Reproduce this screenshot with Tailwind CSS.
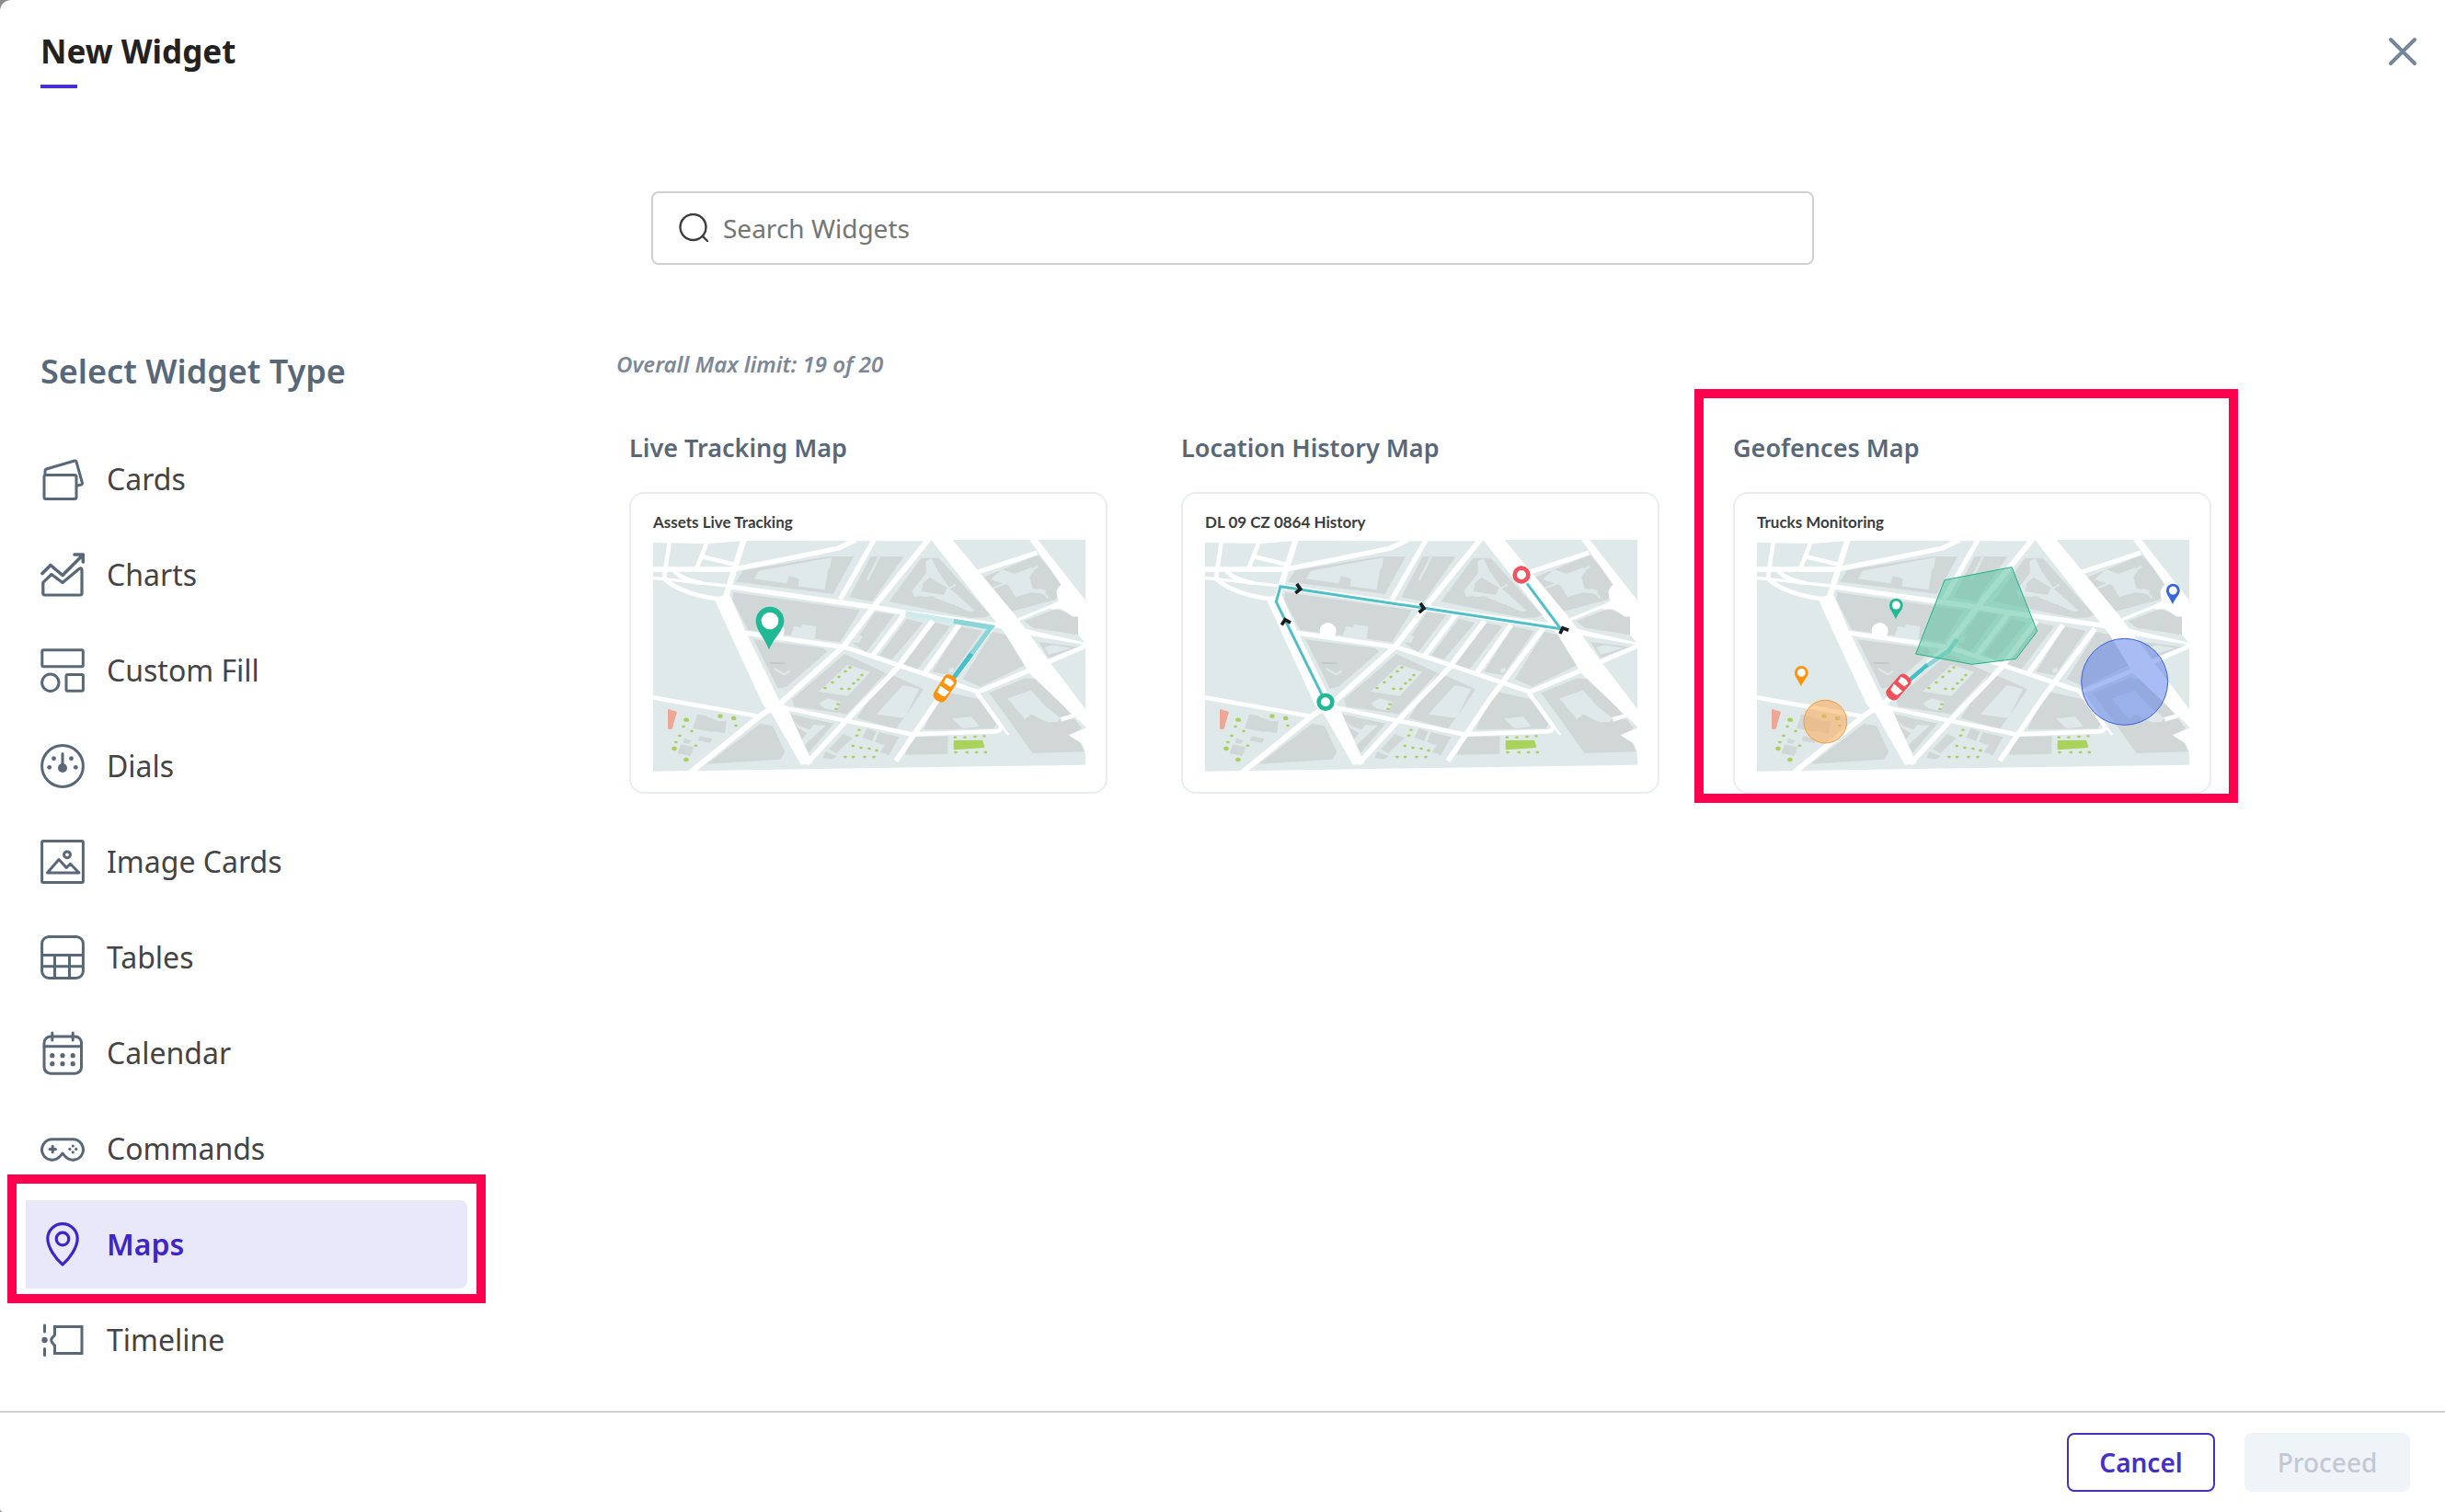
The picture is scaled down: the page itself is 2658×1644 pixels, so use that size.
<!DOCTYPE html>
<html lang="en">
  <head>
    <meta charset="UTF-8" />
    <meta name="viewport" content="width=device-width, initial-scale=1.0" />
    <title>New Widget</title>
    <script src="https://cdn.jsdelivr.net/npm/@tailwindcss/browser@4"></script>
  </head>
  <body class="bg-[#8c8c8c] font-['Noto_Sans',sans-serif]">
    <!-- Shared map artwork -->
    <svg class="hidden" aria-hidden="true">
      <symbol id="city" viewBox="30 21 1410 756">
        <path fill="#dfe9ea" d="M30 30 215 33 325 24 920 25 960 21H1440V755L30 776z" />
        <!-- blocks -->
        <g fill="#d1d7d7">
          <path d="M300 158 325 120 600 75H685L617 197z" />
          <path d="M292 192 705 250 640 355 340 315 288 215z" />
          <path d="M358 346 585 374 597 386 465 500 437 506z" />
          <path d="M655 393 788 455 662 590 490 564 484 540z" />
          <path d="M470 588 618 620 538 716z" />
          <path d="M380 620 420 628 460 712 445 737 205 752z" />
          <path d="M740 75H848L744 222 670 208z" />
          <path d="M905 80H962L1130 266 1110 274 1068 276 800 222z" />
          <path d="M1090 150 1285 70 1332 122 1360 165 1344 216 1195 256z" />
          <path d="M1240 286 1345 246 1416 271V331L1270 308z" />
          <path d="M1288 354 1418 370 1320 406z" />
          <path d="M1137 321 1205 335 1252 425 1098 500 1040 475z" />
          <path d="M755 256 817 265 725 388 683 360z" />
          <path d="M858 278 910 292 808 412 768 397z" />
          <path d="M943 290 1000 302 890 446 845 425z" />
          <path d="M1032 303 1104 318 1002 462 940 452z" />
          <path d="M790 455 868 487 912 508 878 560 822 637 695 602z" />
          <path d="M970 514 1092 540 1150 622 1140 637 912 640z" />
          <path d="M1126 520 1245 472 1300 478 1428 635 1398 655 1425 680 1435 712 1268 717z" />
          <path d="M650 653 680 668 628 716 604 704z" />
          <path d="M592 711 630 727 612 737 583 732z" />
          <path d="M727 636 757 645 745 678 713 665z" />
          <path d="M767 648 832 664 800 724 770 712 787 692 754 680z" />
          <path d="M872 664 992 661 990 719 852 722z" />
          <path d="M174 590 205 595 208 600 232 606 240 612 270 612 264 652 225 645 222 648 160 635z" />
          <path d="M182 660 222 670 218 684 176 676z" />
          <path d="M132 668 155 675 148 686 128 683z" />
          <path d="M120 688 162 697 152 726 110 717z" />
        </g>
        <!-- courtyards -->
        <g fill="#dfe9ea">
          <path d="M374 122 612 78 608 108 600 122 590 184 503 172 506 147 474 138 466 163 360 148z" />
          <path d="M482 323 490 303 513 306 516 297 562 303 557 346 478 337z" />
          <path d="M642 450 662 428 678 432 738 452 665 530 570 515z" />
          <path d="M570 555 600 538 640 550 630 578 592 572z" />
          <path d="M492 612 506 628 540 640 554 624 594 626 524 690 512 678 532 652 500 632z" />
          <path d="M920 90 938 82 958 122 1000 182 1080 252 1062 255 940 205 884 210 874 188 920 130z" />
          <path d="M1130 150 1170 118 1208 132 1262 112 1275 118 1258 142 1268 180 1312 185 1308 198 1262 192 1212 208 1188 168z" />
          <path d="M1305 372 1335 364 1395 374 1320 395z" />
          <path d="M845 495 898 508 850 602 758 590z" />
          <path d="M1005 604 1068 598 1095 630 1040 636z" />
          <path d="M1186 538 1262 512 1312 566 1360 602 1350 615 1315 616 1265 590 1242 606z" />
          <path d="M778 338 806 342 798 360 770 356zM690 330 712 335 702 358 680 352zM995 440 1012 438 1008 452 994 456z" />
          <path d="M765 72 770 78 733 152 725 150z" />
        </g>
        <g fill="#d1d7d7">
          <path d="M932 143 990 178 978 200 905 190 910 162z" />
          <path d="M834 180 868 190 862 208 824 198z" />
          <path d="M902 204 945 215 950 226 1010 232 1068 262 1062 272 830 222 870 208z" />
        </g>
        <path fill="none" stroke="#dfe9ea" stroke-width="6" d="m425 441 32 19 18-12M1150 115l35 28M1140 178l40-16M1255 122l30-14M1290 180l28 30M985 185l32-18" />
        <path stroke="#c1c6c7" stroke-width="5" d="M411 423h49" />
        <path fill="#eda797" d="m78 572 30 10-16 56H78z" />
        <!-- streets -->
        <g fill="none" stroke="#fff" stroke-width="16">
          <path stroke-width="14" d="M83 28 70 118 66 150M206 28 173 112M190 76 296 101M98 120q25 32 92 42M64 146q60 54 185 68" />
          <path stroke-width="19" d="M325 22 266 210" />
          <path d="M28 117H290L440 88 635 48 690 22" />
          <path stroke-width="10" d="M28 145 180 161 290 173" />
          <path d="M275 173 745 240 850 258 1200 306" />
          <path d="M750 22 640 215" />
          <path stroke-width="18" d="M928 20 745 245 650 370 450 550 385 590 145 785" />
          <path stroke-width="15" d="m330 325 325 46 75 25 360 121 190-80 165-72M1075 131l207-68" />
          <path d="M850 262 745 400" />
          <path stroke-width="17" d="M942 285 825 440 660 610 530 752M1028 298 912 462M1132 310 960 540 822 742" />
          <path stroke-width="14" d="m28 535 350 62M450 567l210 44 90 18 122 26 275-9q16-2 20-14l-84-117" />
          <path stroke-width="7" d="m1085 525 104 132" />
          <path stroke-width="10" d="m1190 294 144-59" />
          <path stroke-width="14" d="m1360 607 42-12" />
        </g>
        <g fill="#fff">
          <path d="m232 220 18-17 32 2 50 115 108 222 28 26 82 182-37 5-95-165-30-32z" />
          <path d="M937 21h70L1218 275l110 150 112 148v58L1258 457l-80-130z" />
          <path d="M1257 21h28L1440 218v38l-55-55z" />
          <path d="M1195 300 1440 356v8L1195 322z" />
          <path d="M1345 190q10-28 30-25l65 60v48l-42-2-38-25-30 2-12-10 34-18z" />
          <path d="M1416 268 1440 270v88l-14-15-10-14z" />
          <path d="m1385 658 60-25v78l-8-4-10-22z" />
          <path d="M1438 710h4v40z" />
          <circle cx="431" cy="318" r="27" />
        </g>
        <!-- greenery -->
        <path fill="#a9d45c" d="m1010 675 94-1 8 25-102 7z" />
        <g stroke="#a9cf62" stroke-linecap="round" fill="none">
          <path stroke-width="13" d="M136 608h5M247 596h4M291 603h4M97 702h4M136 738h4" />
          <path stroke-width="7" d="M127 630h4M154 645h4M298 627h4M115 660h4M103 681h4M167 692h4M670 437h4M655 450h4M634 468h4M613 486h4M589 504h4M709 462h4M697 477h4M682 489h4M643 507h4M667 507h4M631 557h4M625 573h4M700 641h4M693 659h4M680 693h4M706 699h4M733 702h4M757 708h4M655 729h4M681 729h4M718 729h4M748 729h4M1013 665h4M1045 665h4M1078 663h4M1108 661h4M1015 714h4M1052 714h4M1083 714h4M1112 714h4" />
        </g>
      </symbol>
      <symbol id="pin" viewBox="-50 -50 100 150" overflow="visible">
        <path fill="currentColor" d="M0-46a46 46 0 0 1 46 46C46 30 18 48-3 94-22 48-46 30-46 0A46 46 0 0 1 0-46z" />
        <circle r="28" fill="#fff" />
      </symbol>
      <symbol id="car" viewBox="-30 -50 60 100" overflow="visible">
        <path fill="currentColor" d="M-23-30Q-22-47 0-47T23-30V28Q23 48 0 48T-23 28z" />
        <path fill="#fff" d="M-16-30Q0-38 16-30L13-13H-13zM-18 2H18L14 24Q0 28-14 24z" />
      </symbol>
    </svg>

    <div class="min-h-screen flex flex-col bg-white rounded-tl-xl rounded-bl-sm">
      <!-- Header -->
      <header class="flex justify-between items-start px-[44px] pt-8">
        <div>
          <h1 class="text-[35px] leading-[48px] font-bold text-[#222]">New Widget</h1>
          <div class="mt-3 w-10 h-1 bg-[#4a30d4]"></div>
        </div>
        <button aria-label="Close" class="mt-2 -mr-3.5">
          <svg class="size-8" viewBox="0 0 32 32" fill="none" stroke="#75869a" stroke-width="4" stroke-linecap="round"><path d="m3 3 26 26M29 3 3 29" /></svg>
        </button>
      </header>

      <!-- Search -->
      <div class="flex justify-center mt-28 pl-[22px]">
        <label class="flex items-center w-[1264px] h-20 border-2 border-[#d0d0d0] rounded-lg px-7 gap-4">
          <svg class="size-8" viewBox="0 0 32 32" fill="none" stroke="#3d3d3d" stroke-width="2.4" stroke-linecap="round"><circle cx="15.5" cy="15" r="14" /><path d="m26 25 5 5" /></svg>
          <input type="search" aria-label="Search Widgets" placeholder="Search Widgets" class="flex-1 text-[28px] outline-none text-[#444] placeholder:text-[#757575]" />
        </label>
      </div>

      <main class="flex flex-1 pt-[92px] pb-6">
        <!-- Widget types -->
        <aside class="w-[508px] shrink-0">
          <h2 class="pl-[44px] text-[36px] leading-[48px] font-semibold text-[#586878]">Select Widget Type</h2>
          <nav class="mt-[45px] ml-7 flex flex-col gap-2 text-[32px] text-[#444]">
            <a href="#" class="flex items-center gap-6 h-24 pl-4">
              <svg class="size-12" viewBox="0 0 48 48" fill="none" stroke="#586878" stroke-width="3" stroke-linejoin="round" stroke-linecap="round"><rect x="4" y="19.5" width="35" height="26" rx="2" /><path d="M5 19v-4q0-1.500 1.500-2L37 4q1.500-.4 2 1l6.400 23q.3 1.600-1.200 2l-4.200 1" /></svg>
              Cards
            </a>
            <a href="#" class="flex items-center gap-6 h-24 pl-4">
              <svg class="size-12" viewBox="0 0 48 48" fill="none" stroke="#586878" stroke-width="3.2" stroke-linejoin="round" stroke-linecap="round"><path stroke-width="3.6" d="M2 22.500 11 13.500 24 24.500 46 2.500M37 2h9.300v8" /><path d="M2.800 32.300 12 23.500l12 9L42 17.500q3-2 3 1.500v25q0 2-2 2H4.800q-2 0-2-2z" /></svg>
              Charts
            </a>
            <a href="#" class="flex items-center gap-6 h-24 pl-4">
              <svg class="size-12" viewBox="0 0 48 48" fill="none" stroke="#586878" stroke-width="3"><rect x="1.8" y="1.8" width="44.5" height="18" rx="1.5" /><circle cx="10.8" cy="37.2" r="9.2" /><rect x="28" y="28.5" width="18.4" height="17.8" rx="1.5" /></svg>
              Custom Fill
            </a>
            <a href="#" class="flex items-center gap-6 h-24 pl-4">
              <svg class="size-12" viewBox="0 0 48 48" fill="none" stroke="#586878" stroke-width="3" stroke-linecap="round"><circle cx="24" cy="24" r="22.4" /><path d="M24 10.500V26" /><g fill="#586878" stroke="none"><circle cx="24" cy="26" r="5" /><circle cx="9.7" cy="25.3" r="2.4" /><circle cx="14.5" cy="15.7" r="2.4" /><circle cx="33.5" cy="15.7" r="2.4" /><circle cx="38.3" cy="25.3" r="2.4" /></g></svg>
              Dials
            </a>
            <a href="#" class="flex items-center gap-6 h-24 pl-4">
              <svg class="size-12" viewBox="0 0 48 48" fill="none" stroke="#586878" stroke-width="3" stroke-linejoin="round"><rect x="1.6" y="1.6" width="44.8" height="44.8" rx="1.5" /><circle cx="29" cy="16.3" r="3.4" /><path d="M7.500 36 20 21.500l8.300 9 4.100-4.200L42 36z" /></svg>
              Image Cards
            </a>
            <a href="#" class="flex items-center gap-6 h-24 pl-4">
              <svg class="size-12" viewBox="0 0 48 48" fill="none" stroke="#586878" stroke-width="3"><rect x="1.6" y="1.6" width="44.8" height="44.8" rx="7.5" /><path d="M2 21.500h44M2 33.700h44M15.500 21.500V46M31.500 21.500V46" /></svg>
              Tables
            </a>
            <a href="#" class="flex items-center gap-6 h-24 pl-4">
              <svg class="size-12" viewBox="0 0 48 48" fill="none" stroke="#586878" stroke-width="3" stroke-linecap="round"><rect x="4" y="6" width="40.5" height="40.2" rx="7" /><path d="M4 16.700h40M12.800 2v8M35.200 2v8" /><g fill="#586878" stroke="none"><circle cx="12.8" cy="26.7" r="2.6" /><circle cx="24" cy="26.7" r="2.6" /><circle cx="35.2" cy="26.7" r="2.6" /><circle cx="12.8" cy="35.7" r="2.6" /><circle cx="24" cy="35.7" r="2.6" /><circle cx="35.2" cy="35.7" r="2.6" /></g></svg>
              Calendar
            </a>
            <a href="#" class="flex items-center gap-6 h-24 pl-4">
              <svg class="size-12" viewBox="0 0 48 48" fill="none" stroke="#586878" stroke-width="3" stroke-linejoin="round" stroke-linecap="round"><path d="M12.800 13.800h22.400a11.200 11.200 0 1 1-8.200 18.800L24 29l-3 3.600A11.200 11.200 0 1 1 12.800 13.800z" /><path d="M10 24.500h6.500M13.200 21.200v6.500" /><g fill="#586878" stroke="none"><circle cx="35.3" cy="21" r="1.6" /><circle cx="35.3" cy="27.8" r="1.6" /><circle cx="31.9" cy="24.4" r="1.6" /><circle cx="38.7" cy="24.4" r="1.6" /></g></svg>
              Commands
            </a>
            <a href="#" aria-current="page" class="relative flex items-center gap-6 h-24 pl-4 bg-[#e9e8fa] rounded-r-lg font-semibold text-[#3f25c8]">
              <svg class="size-12" viewBox="0 0 48 48" fill="none" stroke="currentColor" stroke-width="3.2" stroke-linejoin="round"><path d="M24 46C17 40 7.800 27.500 7.800 17.800a16.200 16.200 0 0 1 32.400 0C40.200 27.500 31 40 24 46z" /><circle cx="24" cy="18" r="6.8" /></svg>
              Maps
              <span class="absolute -left-5 -right-5 -top-7 -bottom-4 border-10 border-[#ff004f]"></span>
            </a>
            <a href="#" class="flex items-center gap-6 h-24 pl-4">
              <svg class="size-12" viewBox="0 0 48 48" fill="none" stroke="#586878" stroke-width="3" stroke-linecap="round"><path d="M4.500 8v7M4.500 33.500v7M15.500 9.500h29.500v29H15.500V30l-3-3.500q-1.500-2.500 0-4.500l3-3.500z" /><circle cx="4.5" cy="24" r="3.2" fill="#586878" stroke="none" /></svg>
              Timeline
            </a>
          </nav>
        </aside>

        <!-- Map widgets -->
        <section class="flex-1 pl-[162px]">
          <p class="text-[24px] leading-8 italic font-semibold text-[#7c8898]">Overall Max limit: 19 of 20</p>
          <div class="mt-[55px] ml-3.5 flex flex-wrap gap-20">
            <a href="#" class="w-[520px]">
              <h3 class="text-[27px] leading-10 font-semibold text-[#586878]">Live Tracking Map</h3>
              <div class="mt-7 border-2 border-[#e9edf2] rounded-2xl pt-[21px] pl-6 pr-[22px] pb-[22px]">
                <p class="font-['Lato',sans-serif] text-[17px] leading-5 font-bold text-[#3c3c3c]">Assets Live Tracking</p>
                <svg class="mt-[9px] w-full" viewBox="30 21 1410 756">
                  <use href="#city" x="30" y="21" width="1410" height="756" />
                  <g fill="none" stroke-width="16">
                    <path stroke="#cdebed" d="m853 261 157 25" />
                    <path stroke="#8bd5d9" d="m1010 286 122 20-63 86" />
                    <path stroke="#49bfc8" d="m1069 392-61 82" />
                  </g>
                  <use href="#pin" x="361" y="235" width="100" height="150" class="text-[#21b896]" />
                  <g transform="translate(982 505) rotate(33)"><use href="#car" x="-30" y="-50" width="60" height="100" class="text-[#fd920b]" /></g>
                </svg>
              </div>
            </a>

            <a href="#" class="w-[520px]">
              <h3 class="text-[27px] leading-10 font-semibold text-[#586878]">Location History Map</h3>
              <div class="mt-7 border-2 border-[#e9edf2] rounded-2xl pt-[21px] pl-6 pr-[22px] pb-[22px]">
                <p class="font-['Lato',sans-serif] text-[17px] leading-5 font-bold text-[#3c3c3c]">DL 09 CZ 0864 History</p>
                <svg class="mt-[9px] w-full" viewBox="30 21 1410 756">
                  <use href="#city" x="30" y="21" width="1410" height="756" />
                  <g fill="none">
                    <path stroke="#fff" stroke-width="16" d="M423 550 262 223 276 173 1190 311 1080 163" />
                    <path stroke="#4fbfc8" stroke-width="9" d="M423 550 262 223 276 173 1190 311 1080 163" />
                    <g stroke="#1c1c1c" stroke-width="11">
                      <path d="m-10-15 14 15-14 15" transform="translate(337 181) rotate(8)" />
                      <path d="m-10-15 14 15-14 15" transform="translate(740 244) rotate(8)" />
                      <path d="m-10-15 14 15-14 15" transform="translate(292 285) rotate(-104)" />
                      <path d="m-10-15 14 15-14 15" transform="translate(1198 312) rotate(-112)" />
                    </g>
                  </g>
                  <circle cx="423" cy="550" r="22" fill="#fff" stroke="#21b896" stroke-width="14" />
                  <circle cx="1062" cy="135" r="22" fill="#fff" stroke="#ee5561" stroke-width="14" />
                </svg>
              </div>
            </a>

            <a href="#" class="relative w-[520px]">
              <h3 class="text-[27px] leading-10 font-semibold text-[#586878]">Geofences Map</h3>
              <div class="mt-7 border-2 border-[#e9edf2] rounded-2xl pt-[21px] pl-6 pr-[22px] pb-[22px]">
                <p class="font-['Lato',sans-serif] text-[17px] leading-5 font-bold text-[#3c3c3c]">Trucks Monitoring</p>
                <svg class="mt-[9px] w-full" viewBox="30 21 1410 756">
                  <use href="#city" x="30" y="21" width="1410" height="756" />
                  <g fill="none" stroke-width="14">
                    <path stroke="#8bd5d9" d="m682 345-26 38-74 50" />
                    <path stroke="#49bfc8" d="m586 428-58 50" />
                  </g>
                  <path fill="#5cc5a3" fill-opacity=".56" stroke="#21b08a" stroke-width="3" d="m642 152 219-42 83 209-69 90-144 18-183-34z" />
                  <circle cx="1229" cy="484" r="141" fill="#5a7fe8" fill-opacity=".52" stroke="#3a63d8" stroke-width="3" />
                  <circle cx="253" cy="614" r="70" fill="#fdaa55" fill-opacity=".55" stroke="#f59a3c" stroke-width="3" />
                  <use href="#pin" x="460" y="210" width="48" height="72" class="text-[#21b896]" />
                  <use href="#pin" x="1363" y="162" width="48" height="72" class="text-[#3568de]" />
                  <use href="#pin" x="151" y="430" width="48" height="72" class="text-[#fd920b]" />
                  <g transform="translate(492 501) rotate(41)"><use href="#car" x="-30" y="-50" width="60" height="100" class="text-[#f0505c]" /></g>
                </svg>
              </div>
              <span class="absolute -left-[42px] -right-[29px] -top-11 -bottom-2.5 border-10 border-[#ff004f]"></span>
            </a>
          </div>
        </section>
      </main>

      <!-- Footer -->
      <footer class="flex justify-end items-center gap-8 h-[110px] pr-[38px] border-t-2 border-[#d0d0d0] text-[28px]">
        <button class="w-[161px] h-16 border-2 border-[#4530b8] rounded-lg font-semibold text-[#4430c8]">Cancel</button>
        <button disabled class="w-[180px] h-16 rounded-lg bg-[#eff4f9] font-medium text-[#c2c9d5]">Proceed</button>
      </footer>
    </div>
  </body>
</html>
